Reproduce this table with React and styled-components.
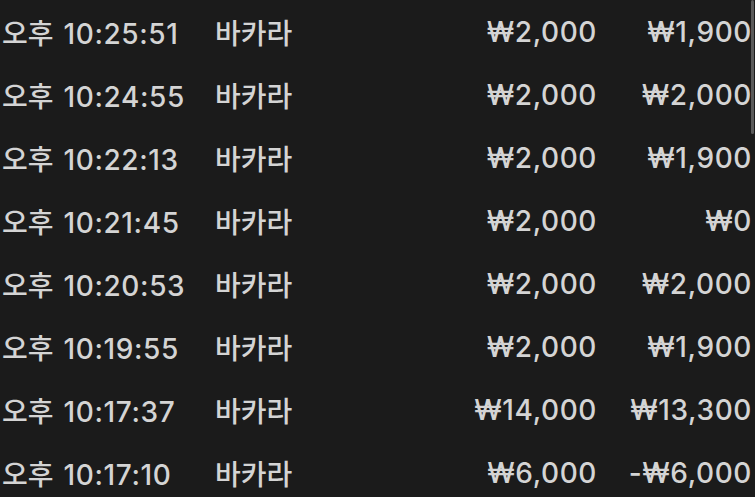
import styled, { createGlobalStyle } from "styled-components";

const GlobalStyle = createGlobalStyle`
  html, body {
    margin: 0;
    padding: 0;
    background: #1b1b1b;
  }
  body {
    font-family: Inter, "Noto Sans CJK KR", sans-serif;
  }
`;

const Page = styled.div`
  position: relative;
  width: 755px;
  height: 497px;
  overflow: hidden;
  background: #1b1b1b;
`;

const List = styled.div`
  display: flex;
  flex-direction: column;
`;

const Row = styled.div`
  display: grid;
  grid-template-columns: 213px 1fr 158px 155px;
  align-items: center;
  height: 63px;
  padding: 0 3px 0 2px;
  color: #d4d4d4;
  font-size: 28px;
  font-weight: 500;
  letter-spacing: 0.6px;
`;

const Cell = styled.div`
  text-align: ${(p) => (p.$right ? "right" : "left")};
  white-space: nowrap;
`;

const Time = styled(Cell)`
  & > span {
    letter-spacing: 0;
    margin-right: 10px;
  }
`;

const Game = styled(Cell)`
  font-family: "Noto Sans CJK KR", sans-serif;
  font-size: 28px;
  letter-spacing: 0;
`;

// thin scroll indicator on the right edge
const ScrollThumb = styled.div`
  position: absolute;
  top: 0;
  right: 1px;
  width: 3px;
  height: 134px;
  border-radius: 2px;
  background: #5a5a5a;
`;

const rows = [
  ["10:25:51", "바카라", "₩2,000", "₩1,900"],
  ["10:24:55", "바카라", "₩2,000", "₩2,000"],
  ["10:22:13", "바카라", "₩2,000", "₩1,900"],
  ["10:21:45", "바카라", "₩2,000", "₩0"],
  ["10:20:53", "바카라", "₩2,000", "₩2,000"],
  ["10:19:55", "바카라", "₩2,000", "₩1,900"],
  ["10:17:37", "바카라", "₩14,000", "₩13,300"],
  ["10:17:10", "바카라", "₩6,000", "-₩6,000"],
];

export default function App() {
  return (
    <>
      <GlobalStyle />
      <Page>
        <List>
          {rows.map(([time, game, bet, win]) => (
            <Row key={time}>
              <Time>
                <span>오후</span>
                {time}
              </Time>
              <Game>{game}</Game>
              <Cell $right>{bet}</Cell>
              <Cell $right>{win}</Cell>
            </Row>
          ))}
        </List>
        <ScrollThumb />
      </Page>
    </>
  );
}
